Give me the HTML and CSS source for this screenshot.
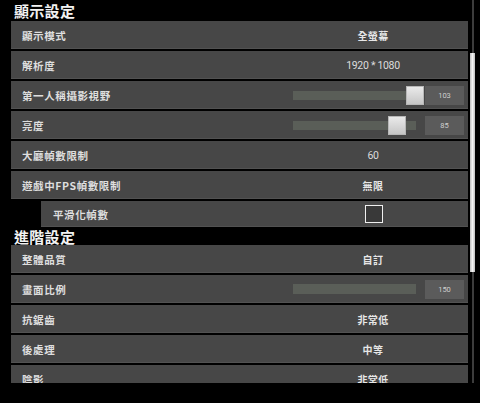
FILE: index.html
```html
<!DOCTYPE html>
<html lang="zh-Hant">
<head>
<meta charset="utf-8">
<link rel="stylesheet" href="styles.css">
</head>
<body>
<div class="screen">
  <div class="viewport">
    <div class="content">
      <div class="section-title first">顯示設定</div>
      <div class="row"><span class="label">顯示模式</span><div class="control"><span class="value">全螢幕</span></div></div>
      <div class="row"><span class="label">解析度</span><div class="control"><span class="value num">1920 * 1080</span></div></div>
      <div class="row"><span class="label">第一人稱攝影視野</span><div class="control">
        <div class="track"><div class="thumb" style="left:113px"></div></div><div class="numbox">103</div></div></div>
      <div class="row"><span class="label">亮度</span><div class="control">
        <div class="track"><div class="thumb" style="left:95px"></div></div><div class="numbox">85</div></div></div>
      <div class="row"><span class="label">大廳幀數限制</span><div class="control"><span class="value num">60</span></div></div>
      <div class="row"><span class="label">遊戲中FPS幀數限制</span><div class="control"><span class="value">無限</span></div></div>
      <div class="row sub"><span class="label">平滑化幀數</span><div class="control"><span class="value"><span class="checkbox"></span></span></div></div>
      <div class="section-title">進階設定</div>
      <div class="row"><span class="label">整體品質</span><div class="control"><span class="value">自訂</span></div></div>
      <div class="row"><span class="label">畫面比例</span><div class="control">
        <div class="track long"></div><div class="numbox">150</div></div></div>
      <div class="row"><span class="label">抗鋸齒</span><div class="control"><span class="value">非常低</span></div></div>
      <div class="row"><span class="label">後處理</span><div class="control"><span class="value">中等</span></div></div>
      <div class="row"><span class="label">陰影</span><div class="control"><span class="value">非常低</span></div></div>
    </div>
    <div class="scrollbar"><div class="scroll-thumb"></div></div>
  </div>
  <div class="footer"></div>
</div>
</body>
</html>
```
FILE: styles.css
```css
html, body {
  margin: 0;
  padding: 0;
  background: #000;
}
body {
  font-family: "Noto Sans CJK TC", "Noto Sans", sans-serif;
  color: #e2e2e2;
}
.screen {
  width: 480px;
  height: 403px;
  overflow: hidden;
  background: #000;
}
.viewport {
  height: 383px;
  display: flex;
  overflow: hidden;
}
.content {
  width: 457px;
  margin-left: 11px;
  flex: none;
}
.section-title {
  height: 16px;
  line-height: 16px;
  margin-bottom: 0;
  padding-left: 3px;
  font-size: 15px;
  font-weight: 700;
  letter-spacing: 0.3px;
  color: #f2f2f2;
}
.section-title.first {
  margin-top: 3px;
  margin-bottom: 2px;
}
.row {
  height: 28px;
  margin-bottom: 2px;
  background: #474747;
  box-shadow: inset 0 -1px 0 #525252;
  display: flex;
  align-items: center;
  padding-left: 11px;
  padding-right: 4px;
}
.row.sub {
  height: 26px;
  margin-left: 30px;
  padding-left: 12px;
}
.label {
  flex: 1;
  font-size: 10.5px;
  font-weight: 700;
  letter-spacing: 0.6px;
  color: #dedede;
  white-space: nowrap;
}
.control {
  width: 171px;
  display: flex;
  align-items: center;
}
.value {
  width: 160px;
  text-align: center;
  font-size: 10px;
  font-weight: 700;
  letter-spacing: 0.4px;
  color: #e6e6e6;
  display: flex;
  justify-content: center;
  align-items: center;
}
.value.num {
  font-family: Roboto, "Noto Sans", sans-serif;
  font-weight: 400;
  font-size: 10.5px;
  letter-spacing: -0.3px;
  color: #dcdcdc;
}
.checkbox {
  width: 16px;
  height: 16px;
  border: 1.5px solid #f0f0f0;
  background: #393939;
  margin-left: 1px;
}
.track {
  position: relative;
  width: 123px;
  height: 9px;
  background: #5a5e58;
}
.track.long {
  height: 10px;
}
.thumb {
  position: absolute;
  top: -5px;
  width: 18px;
  height: 19px;
  background: linear-gradient(#ececec, #c4c4c4);
  box-shadow: inset 0 0 0 1px #b8b8b8;
}
.numbox {
  margin-left: 9px;
  width: 39px;
  height: 19px;
  background: #5b5b5b;
  font-family: Roboto, "Noto Sans", sans-serif;
  font-size: 7.5px;
  line-height: 19px;
  text-align: center;
  color: #cfcfcf;
}
.scrollbar {
  position: relative;
  width: 12px;
  flex: none;
  display: flex;
  justify-content: center;
}
.scrollbar::before {
  content: "";
  width: 2px;
  height: 100%;
  background: #3c3c3c;
  margin-left: -2px;
}
.scroll-thumb {
  position: absolute;
  left: 2px;
  top: 53px;
  width: 5px;
  height: 219px;
  background: linear-gradient(90deg, #bdbdbd, #f4f4f4 50%, #bdbdbd);
}
.footer {
  height: 20px;
  background: #000;
}
```
